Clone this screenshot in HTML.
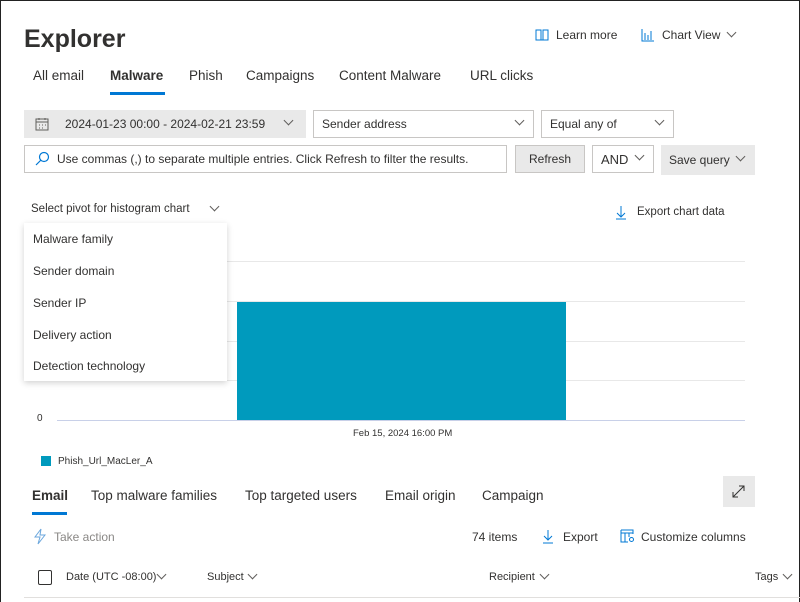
<!DOCTYPE html>
<html><head><meta charset="utf-8"><style>
*{margin:0;padding:0;box-sizing:border-box}
body{width:800px;height:602px;overflow:hidden;background:#fff;font-family:"Liberation Sans",sans-serif;color:#323130;position:relative}
.frame{position:absolute;left:0;top:0;width:800px;height:602px;border:1px solid #222;border-bottom:none}
.a{position:absolute;white-space:nowrap}
.box{position:absolute;border:1px solid #c8c6c4;background:#fff;font-size:12px;padding-left:8px;line-height:25px}
.chev{position:absolute;width:7px;height:7px;border-right:1px solid #605e5c;border-bottom:1px solid #605e5c;transform:rotate(45deg)}
.grid{position:absolute;left:57px;width:688px;height:1px;background:#e8e8e8}
</style></head><body>
<div class="frame"></div>
<div class="a" style="left:24px;top:25px;font-size:25px;font-weight:bold;color:#323130">Explorer</div>
<svg class="a" style="left:535px;top:28px" width="14" height="14" viewBox="0 0 14 14" fill="none" stroke="#0078d4"><path d="M1 2h5v10H1zM8 2h5v10H8zM6 12h2"/></svg>
<div class="a" style="left:556px;top:28px;font-size:12px">Learn more</div>
<svg class="a" style="left:641px;top:28px" width="14" height="14" viewBox="0 0 14 14" fill="none" stroke="#0078d4"><path d="M1 1v12h12M4 5v7M7 7v5M10 3v9"/></svg>
<div class="a" style="left:662px;top:28px;font-size:12px">Chart View</div>
<div class="chev" style="left:728px;top:29px"></div>
<div class="a" style="left:33px;top:68px;font-size:13.5px">All email</div>
<div class="a" style="left:110px;top:68px;font-size:13.5px;font-weight:bold">Malware</div>
<div class="a" style="left:110px;top:92px;width:55px;height:3px;background:#0078d4"></div>
<div class="a" style="left:189px;top:68px;font-size:13.5px">Phish</div>
<div class="a" style="left:246px;top:68px;font-size:13.5px">Campaigns</div>
<div class="a" style="left:339px;top:68px;font-size:13.5px">Content Malware</div>
<div class="a" style="left:470px;top:68px;font-size:13.5px">URL clicks</div>
<div class="a" style="left:24px;top:110px;width:282px;height:28px;background:#e9e9e9"></div>
<svg class="a" style="left:35px;top:117px" width="14" height="14" viewBox="0 0 14 14" fill="none" stroke="#605e5c"><rect x="1" y="2" width="12" height="11"/><path d="M1 5h12M4 1v2M10 1v2M4 8h1M7 8h1M10 8h1M4 11h1M7 11h1"/></svg>
<div class="a" style="left:65px;top:117px;font-size:12px">2024-01-23 00:00 - 2024-02-21 23:59</div>
<div class="chev" style="left:285px;top:117px"></div>
<div class="box" style="left:313px;top:110px;width:221px;height:28px;line-height:27px">Sender address</div>
<div class="chev" style="left:516px;top:117px"></div>
<div class="box" style="left:541px;top:110px;width:133px;height:28px;line-height:27px">Equal any of</div>
<div class="chev" style="left:656px;top:117px"></div>
<div class="box" style="left:24px;top:145px;width:483px;height:28px;padding-left:32px;line-height:27px">Use commas (,) to separate multiple entries. Click Refresh to filter the results.</div>
<svg class="a" style="left:35px;top:151px" width="15" height="15" viewBox="0 0 15 15" fill="none" stroke="#0078d4" stroke-width="1.2"><circle cx="9" cy="6" r="4.5"/><path d="M6 9l-5 5"/></svg>
<div class="box" style="left:515px;top:145px;width:70px;height:28px;background:#e9e9e9;text-align:center;padding:0;line-height:27px">Refresh</div>
<div class="box" style="left:592px;top:145px;width:62px;height:28px;font-size:13px;line-height:27px">AND</div>
<div class="chev" style="left:636px;top:152px"></div>
<div class="a" style="left:661px;top:145px;width:94px;height:30px;background:#e9e9e9;font-size:12px;padding-left:8px;line-height:30px">Save query</div>
<div class="chev" style="left:737px;top:153px"></div>
<div class="a" style="left:31px;top:203px;font-size:11.5px">Select pivot for histogram chart</div>
<div class="chev" style="left:211px;top:203px"></div>
<svg class="a" style="left:615px;top:205px" width="12" height="15" viewBox="0 0 12 15" fill="none" stroke="#0078d4"><path d="M6 1v11M2 8l4 4 4-4M1 14h10"/></svg>
<div class="a" style="left:637px;top:206px;font-size:11.5px">Export chart data</div>
<div class="grid" style="top:261px"></div>
<div class="grid" style="top:301px"></div>
<div class="grid" style="top:341px"></div>
<div class="grid" style="top:380px"></div>
<div class="grid" style="top:420px;background:#c8d0e8"></div>
<div class="a" style="left:237px;top:302px;width:329px;height:118px;background:#009abd"></div>
<div class="a" style="left:37px;top:413px;font-size:10px">0</div>
<div class="a" style="left:353px;top:428px;font-size:9.5px">Feb 15, 2024 16:00 PM</div>
<div class="a" style="left:41px;top:456px;width:10px;height:10px;background:#009abd"></div>
<div class="a" style="left:58px;top:456px;font-size:10px">Phish_Url_MacLer_A</div>
<div class="a" style="left:24px;top:223px;width:203px;height:158px;background:#fff;box-shadow:0 2px 6px rgba(0,0,0,.18)"></div>
<div class="a" style="left:33px;top:232px;font-size:12px">Malware family</div>
<div class="a" style="left:33px;top:264px;font-size:12px">Sender domain</div>
<div class="a" style="left:33px;top:296px;font-size:12px">Sender IP</div>
<div class="a" style="left:33px;top:328px;font-size:12px">Delivery action</div>
<div class="a" style="left:33px;top:359px;font-size:12px">Detection technology</div>
<div class="a" style="left:32px;top:488px;font-size:13.5px;font-weight:bold">Email</div>
<div class="a" style="left:32px;top:512px;width:35px;height:3px;background:#0078d4"></div>
<div class="a" style="left:91px;top:488px;font-size:13.5px">Top malware families</div>
<div class="a" style="left:245px;top:488px;font-size:13.5px">Top targeted users</div>
<div class="a" style="left:385px;top:488px;font-size:13.5px">Email origin</div>
<div class="a" style="left:482px;top:488px;font-size:13.5px">Campaign</div>
<div class="a" style="left:723px;top:476px;width:32px;height:31px;background:#e9e9e9"></div>
<svg class="a" style="left:731px;top:484px" width="15" height="15" viewBox="0 0 15 15" fill="none" stroke="#323130"><path d="M2 13L13 2M8 2h5v5M2 8v5h5"/></svg>
<svg class="a" style="left:33px;top:528px" width="13" height="17" viewBox="0 0 13 17" fill="none" stroke="#6aa6dc"><path d="M8 1L2 9h5l-2 7 7-9H7z"/></svg>
<div class="a" style="left:54px;top:530px;font-size:12px;color:#8a8886">Take action</div>
<div class="a" style="left:472px;top:530px;font-size:12px">74 items</div>
<svg class="a" style="left:542px;top:529px" width="12" height="15" viewBox="0 0 12 15" fill="none" stroke="#0078d4"><path d="M6 1v10M2 7l4 4 4-4M1 14h10"/></svg>
<div class="a" style="left:563px;top:530px;font-size:12px">Export</div>
<svg class="a" style="left:620px;top:529px" width="15" height="14" viewBox="0 0 15 14" fill="none" stroke="#0078d4"><path d="M1 1h12v4M1 1v12h7M1 4h12M5 4v9M9 4v4"/><circle cx="11.5" cy="10.5" r="2"/></svg>
<div class="a" style="left:641px;top:530px;font-size:12px">Customize columns</div>
<div class="a" style="left:38px;top:570px;width:14px;height:15px;border:1px solid #323130;border-radius:2px"></div>
<div class="a" style="left:66px;top:571px;font-size:11px">Date (UTC -08:00)</div>
<div class="chev" style="left:158px;top:571px"></div>
<div class="a" style="left:207px;top:571px;font-size:11px">Subject</div>
<div class="chev" style="left:249px;top:571px"></div>
<div class="a" style="left:489px;top:571px;font-size:11px">Recipient</div>
<div class="chev" style="left:541px;top:571px"></div>
<div class="a" style="left:755px;top:571px;font-size:11px">Tags</div>
<div class="chev" style="left:784px;top:571px"></div>
<div class="a" style="left:24px;top:597px;width:776px;height:1px;background:#e1dfdd"></div>
</body></html>
